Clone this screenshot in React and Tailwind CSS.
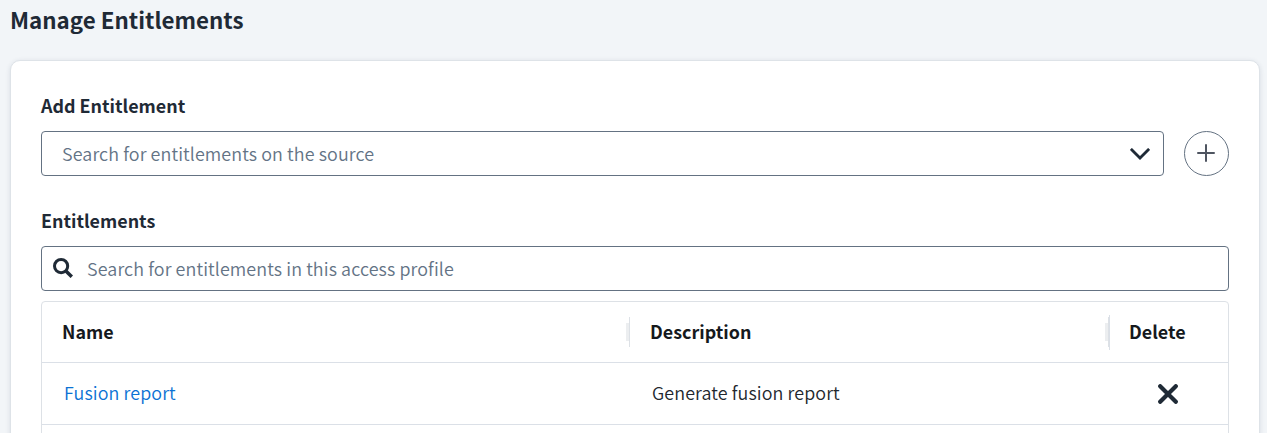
import React from 'react';

function SearchIcon() {
  return (
    <svg viewBox="0 0 20 20" className="mb-px h-5 w-5" fill="none" stroke="#1f2a36">
      <circle cx="8.1" cy="8.1" r="6.6" strokeWidth="3" />
      <path d="M12.9 12.9L18.8 18.8" strokeWidth="3.5" />
    </svg>
  );
}

function ChevronIcon() {
  return (
    <svg viewBox="0 0 20 12" className="h-3 w-5" fill="none" stroke="#1f2a36" strokeWidth="2.8">
      <path d="M0.9 0.9L10 10L19.1 0.9" />
    </svg>
  );
}

function PlusIcon() {
  return (
    <svg viewBox="0 0 18 18" className="mr-px mb-px h-[18px] w-[18px]" fill="none" stroke="#4f5561" strokeWidth="2" strokeLinecap="round">
      <path d="M9 1V17M1 9H17" />
    </svg>
  );
}

function CloseIcon() {
  return (
    <svg viewBox="0 0 20 20" className="h-5 w-5" fill="none" stroke="#1f2a36" strokeWidth="4.2" strokeLinecap="round">
      <path d="M2.2 2.2L17.8 17.8M17.8 2.2L2.2 17.8" />
    </svg>
  );
}

function ColumnHandle({ last = false }) {
  return (
    <div className="flex items-center">
      <div className="h-[18px] w-[3px] bg-[#eceef0]" />
      <div className="h-[30px] w-px bg-[#dde1e6]" />
      {last && <div className="h-[35px] w-px bg-[#dbe0e7]" />}
    </div>
  );
}

export default function App() {
  return (
    <div className="flex h-[433px] w-full flex-col overflow-hidden bg-[#f2f5f8] pr-[7px] pl-[10px] font-['Noto_Sans_CJK_SC','Noto_Sans',sans-serif] text-[17.9px] font-[350] text-[#1f2a36]">
      <h1 className="h-[60px] shrink-0 text-[22.35px] leading-[38px] font-bold whitespace-nowrap">Manage Entitlements</h1>
      <main className="h-[500px] shrink-0 rounded-[10px] border border-[#dee3e8] bg-white px-[30px] pt-[30px] shadow-[0_1px_5px_rgba(30,50,80,0.12)]">
        <h2 className="h-[40px] leading-[28px] font-bold">Add Entitlement</h2>
        <div className="flex gap-5">
          <div className="flex h-[45px] flex-1 items-center justify-between rounded-[4px] border border-[#647282] pr-[13px] pl-5">
            <span className="tracking-[0.1px] text-[#637385]">Search for entitlements on the source</span>
            <ChevronIcon />
          </div>
          <button className="flex h-[45px] w-[45px] items-center justify-center rounded-full border border-[#647282]">
            <PlusIcon />
          </button>
        </div>
        <h2 className="mt-[30px] h-[40px] leading-[28px] font-bold">Entitlements</h2>
        <div className="flex h-[45px] items-center gap-[14px] rounded-[4px] border border-[#647282] pl-[11px]">
          <SearchIcon />
          <span className="tracking-[0.1px] text-[#637385]">Search for entitlements in this access profile</span>
        </div>
        <div className="mt-[10px] h-[200px] rounded-[4px] border border-[#dde1e6]">
          <div className="flex h-[61px] items-center border-b border-[#dbe0e7] font-bold text-[#15191d]">
            <div className="w-[584px] pb-[2px] pl-5">Name</div>
            <ColumnHandle />
            <div className="w-[475px] pb-[2px] pl-5">Description</div>
            <ColumnHandle last />
            <div className="pb-[2px] pl-[19px]">Delete</div>
          </div>
          <div className="flex h-[62px] items-center border-b border-[#dbe0e7]">
            <a className="w-[588px] pb-[2px] pl-[22px] tracking-[0.1px] text-[#0b72d4]">Fusion report</a>
            <div className="w-[528px] pb-[2px] pl-[22px] tracking-[0.1px] text-[#22282e]">Generate fusion report</div>
            <CloseIcon />
          </div>
        </div>
      </main>
    </div>
  );
}
